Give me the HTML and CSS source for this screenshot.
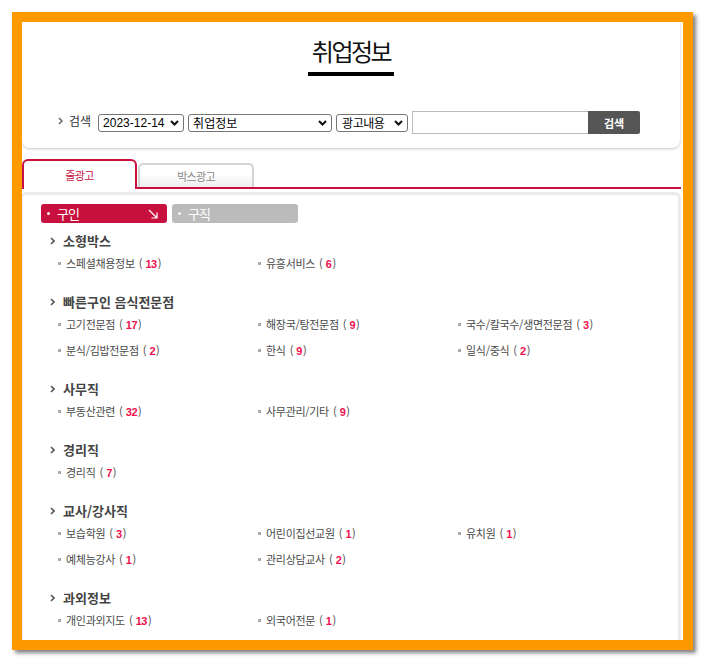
FILE: index.html
```html
<!DOCTYPE html>
<html lang="ko">
<head>
    <meta charset="UTF-8">
    <meta name="viewport" content="width=device-width, initial-scale=1.0">
    <title>취업정보</title>
    <link rel="stylesheet" href="styles.css">
</head>
<body>
<div class="frame">
    <div class="top-card">
        <h1 class="page-title">취업정보</h1>
        <form class="search">
            <span class="search-label">
                <svg width="5" height="8" viewBox="0 0 5 8"><path d="M1 1l3 3-3 3" fill="none" stroke="#666" stroke-width="1.5"/></svg>
                검색
            </span>
            <label class="sel sel-date">
                <select><option>2023-12-14</option></select>
                <svg class="caret" width="9" height="6" viewBox="0 0 9 6"><path d="M1 1l3.5 3.5L8 1" fill="none" stroke="#111" stroke-width="2"/></svg>
            </label>
            <label class="sel sel-cat">
                <select><option>취업정보</option></select>
                <svg class="caret" width="9" height="6" viewBox="0 0 9 6"><path d="M1 1l3.5 3.5L8 1" fill="none" stroke="#111" stroke-width="2"/></svg>
            </label>
            <label class="sel sel-field">
                <select><option>광고내용</option></select>
                <svg class="caret" width="9" height="6" viewBox="0 0 9 6"><path d="M1 1l3.5 3.5L8 1" fill="none" stroke="#111" stroke-width="2"/></svg>
            </label>
            <input class="search-input" type="text">
            <button class="search-btn" type="button">검색</button>
        </form>
    </div>

    <div class="tabs">
        <a class="tab active" href="#">줄광고</a>
        <a class="tab" href="#">박스광고</a>
    </div>

    <div class="board">
        <div class="kind">
            <a class="kind-btn on" href="#">구인
                <svg width="10" height="10" viewBox="0 0 10 10"><path d="M1 1l8 8M9 3.5V9H3.5" fill="none" stroke="#fff" stroke-width="1.2"/></svg>
            </a>
            <a class="kind-btn" href="#">구직</a>
        </div>

        <div class="group">
            <h3 class="group-title"><svg width="5" height="8" viewBox="0 0 5 8"><path d="M1 1l3 3-3 3" fill="none" stroke="#555" stroke-width="1.6"/></svg>소형박스</h3>
            <ul class="items">
                <li>스페셜채용정보<span class="cnt">(<b>13</b>)</span></li>
                <li>유흥서비스<span class="cnt">(<b>6</b>)</span></li>
            </ul>
        </div>

        <div class="group">
            <h3 class="group-title"><svg width="5" height="8" viewBox="0 0 5 8"><path d="M1 1l3 3-3 3" fill="none" stroke="#555" stroke-width="1.6"/></svg>빠른구인 음식전문점</h3>
            <ul class="items">
                <li>고기전문점<span class="cnt">(<b>17</b>)</span></li>
                <li>해장국/탕전문점<span class="cnt">(<b>9</b>)</span></li>
                <li>국수/칼국수/생면전문점<span class="cnt">(<b>3</b>)</span></li>
                <li>분식/김밥전문점<span class="cnt">(<b>2</b>)</span></li>
                <li>한식<span class="cnt">(<b>9</b>)</span></li>
                <li>일식/중식<span class="cnt">(<b>2</b>)</span></li>
            </ul>
        </div>

        <div class="group">
            <h3 class="group-title"><svg width="5" height="8" viewBox="0 0 5 8"><path d="M1 1l3 3-3 3" fill="none" stroke="#555" stroke-width="1.6"/></svg>사무직</h3>
            <ul class="items">
                <li>부동산관련<span class="cnt">(<b>32</b>)</span></li>
                <li>사무관리/기타<span class="cnt">(<b>9</b>)</span></li>
            </ul>
        </div>

        <div class="group">
            <h3 class="group-title"><svg width="5" height="8" viewBox="0 0 5 8"><path d="M1 1l3 3-3 3" fill="none" stroke="#555" stroke-width="1.6"/></svg>경리직</h3>
            <ul class="items">
                <li>경리직<span class="cnt">(<b>7</b>)</span></li>
            </ul>
        </div>

        <div class="group">
            <h3 class="group-title"><svg width="5" height="8" viewBox="0 0 5 8"><path d="M1 1l3 3-3 3" fill="none" stroke="#555" stroke-width="1.6"/></svg>교사/강사직</h3>
            <ul class="items">
                <li>보습학원<span class="cnt">(<b>3</b>)</span></li>
                <li>어린이집선교원<span class="cnt">(<b>1</b>)</span></li>
                <li>유치원<span class="cnt">(<b>1</b>)</span></li>
                <li>예체능강사<span class="cnt">(<b>1</b>)</span></li>
                <li>관리상담교사<span class="cnt">(<b>2</b>)</span></li>
            </ul>
        </div>

        <div class="group">
            <h3 class="group-title"><svg width="5" height="8" viewBox="0 0 5 8"><path d="M1 1l3 3-3 3" fill="none" stroke="#555" stroke-width="1.6"/></svg>과외정보</h3>
            <ul class="items">
                <li>개인과외지도<span class="cnt">(<b>13</b>)</span></li>
                <li>외국어전문<span class="cnt">(<b>1</b>)</span></li>
            </ul>
        </div>
    </div>
</div>
</body>
</html>
```

FILE: styles.css
```css
body {
    margin: 0;
    padding: 12px;
    background-color: #fff;
    font-family: "Noto Sans CJK KR", "Liberation Sans", sans-serif;
    color: #444;
}
.frame {
    width: 661px;
    height: 618px;
    border: 10px solid #ff9900;
    box-shadow: 3px 3px 4px rgba(0, 0, 0, 0.5);
    overflow: hidden;
    background-color: #fff;
}

/* top card */
.top-card {
    width: 658px;
    height: 126px;
    box-sizing: border-box;
    padding-top: 15px;
    text-align: center;
    border-radius: 0 0 8px 8px;
    box-shadow: 0 1px 3px rgba(0, 0, 0, 0.22);
}
.page-title {
    display: inline-block;
    margin: 0;
    padding: 0 4px 7px;
    font-size: 24px;
    font-weight: normal;
    line-height: 28px;
    letter-spacing: -2.5px;
    color: #111;
    border-bottom: 4px solid #000;
}
.search {
    display: flex;
    align-items: center;
    height: 23px;
    margin-top: 35px;
    padding-left: 36px;
}
.search-label {
    display: flex;
    align-items: center;
    gap: 6px;
    margin-right: 7px;
    font-size: 12px;
    color: #333;
    margin-top: -4px;
}
.sel {
    position: relative;
    display: block;
    margin-right: 4px;
}
.sel select {
    appearance: none;
    display: block;
    height: 18px;
    box-sizing: border-box;
    padding: 0 0 0 4px;
    border: 1px solid #767676;
    border-radius: 3px;
    background: #fff;
    color: #000;
    font-family: "Liberation Sans", "Noto Sans CJK KR", sans-serif;
    font-size: 12px;
    line-height: 16px;
}
.sel-date select { width: 86px; }
.sel-cat select { width: 144px; font-family: "Noto Sans CJK KR", sans-serif; }
.sel-field select { width: 72px; font-family: "Noto Sans CJK KR", sans-serif; letter-spacing: -0.5px; padding-left: 5px; }
.caret {
    position: absolute;
    right: 5px;
    top: 6px;
    pointer-events: none;
}
.search-input {
    width: 176px;
    height: 23px;
    box-sizing: border-box;
    margin: 0;
    border: 1px solid #bbb;
    border-right: none;
}
.search-btn {
    width: 52px;
    height: 23px;
    border: none;
    border-radius: 0 2px 2px 0;
    background-color: #555;
    color: #fff;
    font-family: "Noto Sans CJK KR", sans-serif;
    font-size: 11px;
    font-weight: bold;
    padding: 0;
}

/* tabs */
.tabs {
    display: flex;
    align-items: flex-end;
    gap: 1px;
    width: 659px;
    height: 28px;
    margin-top: 11px;
    border-bottom: 2px solid #c8103f;
}
.tab {
    display: flex;
    align-items: center;
    justify-content: center;
    box-sizing: border-box;
    font-size: 11px;
    letter-spacing: -0.7px;
    text-decoration: none;
}
.tab.active {
    width: 115px;
    height: 30px;
    margin-bottom: -2px;
    border: 2px solid #c8103f;
    border-bottom: none;
    border-radius: 6px 6px 0 0;
    background-color: #fff;
    color: #c8103f;
}
.tab:not(.active) {
    width: 116px;
    height: 24px;
    border: 2px solid #d4d4d4;
    border-bottom: none;
    border-radius: 5px 5px 0 0;
    background: linear-gradient(to bottom, #fff 40%, #eee);
    color: #888;
}

/* board */
.board {
    width: 661px;
    box-sizing: border-box;
    margin: 3px 0 0 -2px;
    padding: 9px 0 0 18px;
    border: 3px solid #ebebeb;
    border-radius: 6px 6px 0 0;
    height: 600px;
}
.kind {
    display: flex;
    gap: 5px;
    margin-bottom: 9px;
}
.kind-btn {
    display: flex;
    align-items: center;
    width: 126px;
    height: 19px;
    box-sizing: border-box;
    padding: 0 9px 0 6px;
    border-radius: 3px;
    background-color: #bbb;
    color: #fff;
    font-size: 13px;
    letter-spacing: -1px;
    text-decoration: none;
}
.kind-btn::before {
    content: "";
    width: 3px;
    height: 3px;
    margin-right: 7px;
    border-radius: 50%;
    background-color: #f4f4f4;
}
.kind-btn.on {
    background-color: #c8103f;
}
.kind-btn svg {
    margin-left: auto;
}
.group {
    margin-left: 9px;
}
.group + .group {
    margin-top: 17px;
}
.group-title {
    display: flex;
    align-items: center;
    gap: 8px;
    margin: 0;
    font-size: 13px;
    line-height: 18px;
    font-weight: bold;
    color: #444;
}
.items {
    display: grid;
    grid-template-columns: repeat(3, 200px);
    margin: 0;
    padding: 0 0 0 8px;
    list-style: none;
}
.items li {
    display: flex;
    align-items: center;
    height: 26px;
    font-size: 11px;
    letter-spacing: -0.3px;
    color: #4a4a4a;
}
.items li::before {
    content: "";
    width: 3px;
    height: 3px;
    margin-right: 5px;
    background-color: #aaa;
}
.cnt {
    margin-left: 4px;
    letter-spacing: 0;
}
.cnt b {
    padding: 0 1px 0 3px;
    font-family: "Liberation Sans", sans-serif;
    font-size: 11px;
    letter-spacing: -0.5px;
    color: #ee1150;
}
```
